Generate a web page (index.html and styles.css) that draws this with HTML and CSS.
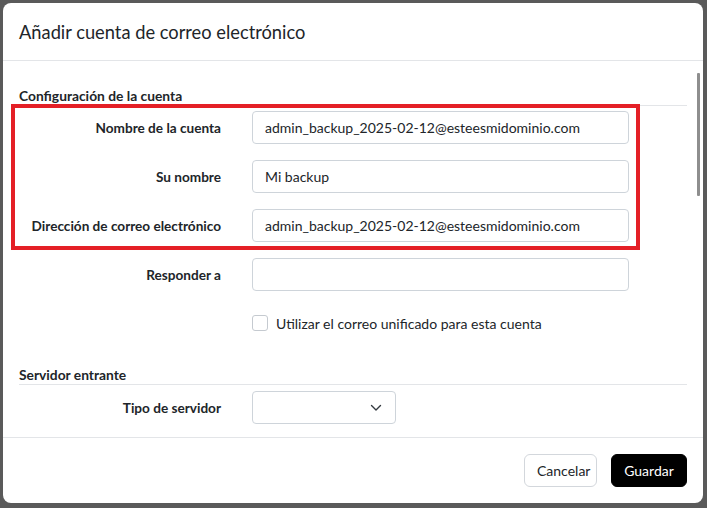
FILE: index.html
```html
<!DOCTYPE html>
<html lang="es">
<head>
<meta charset="utf-8">
<title>Añadir cuenta de correo electrónico</title>
<link rel="stylesheet" href="styles.css">
</head>
<body>
<div class="modal">
  <div class="modal-header">
    <h1 class="modal-title">Añadir cuenta de correo electrónico</h1>
  </div>
  <div class="modal-body">
    <div class="scroll-content">
      <h2 class="section-title">Configuración de la cuenta</h2>
      <div class="form-row first">
        <label class="form-label">Nombre de la cuenta</label>
        <input class="form-input" type="text" value="admin_backup_2025-02-12@esteesmidominio.com">
      </div>
      <div class="form-row">
        <label class="form-label">Su nombre</label>
        <input class="form-input" type="text" value="Mi backup">
      </div>
      <div class="form-row">
        <label class="form-label">Dirección de correo electrónico</label>
        <input class="form-input" type="text" value="admin_backup_2025-02-12@esteesmidominio.com">
      </div>
      <div class="form-row">
        <label class="form-label">Responder a</label>
        <input class="form-input" type="text" value="">
      </div>
      <div class="check-row">
        <span class="checkbox"></span>
        <span class="check-label">Utilizar el correo unificado para esta cuenta</span>
      </div>
      <h2 class="section-title second">Servidor entrante</h2>
      <div class="form-row select-row">
        <label class="form-label">Tipo de servidor</label>
        <div class="select">
          <svg class="chevron" width="12" height="8" viewBox="0 0 12 8"><path d="M1.5 1.5 L6 6 L10.5 1.5" fill="none" stroke="#343a40" stroke-width="1.4" stroke-linecap="round" stroke-linejoin="round"/></svg>
        </div>
      </div>
    </div>
    <div class="scrollbar"><div class="thumb"></div></div>
    <div class="highlight"></div>
  </div>
  <div class="modal-footer">
    <button class="btn btn-secondary">Cancelar</button>
    <button class="btn btn-primary">Guardar</button>
  </div>
</div>
</body>
</html>
```

FILE: styles.css
```css
html, body {
  margin: 0;
  padding: 0;
}
body {
  width: 707px;
  height: 508px;
  background: #5a5a5a;
  font-family: "Lato", "Liberation Sans", sans-serif;
  color: #212529;
  overflow: hidden;
}
.modal {
  margin: 3px 0 0 3px;
  width: 700px;
  height: 500px;
  background: #fff;
  border-radius: 8px;
  display: flex;
  flex-direction: column;
  overflow: hidden;
}
.modal-header {
  height: 57px;
  padding: 0 16px;
  display: flex;
  align-items: center;
  border-bottom: 1px solid #e3e5e8;
  flex: none;
}
.modal-title {
  margin: 0;
  font-size: 18.3px;
  font-weight: 400;
  color: #212529;
}
.modal-body {
  position: relative;
  flex: 1;
  overflow: hidden;
}
.scroll-content {
  padding: 26px 16px 0 16px;
}
.section-title {
  margin: 0;
  font-size: 13.8px;
  font-weight: 700;
  line-height: 18px;
  border-bottom: 1px solid #e3e5e8;
}
.section-title.second {
  margin-top: 35px;
}
.form-row {
  display: grid;
  grid-template-columns: 202px 377px;
  column-gap: 31px;
  align-items: center;
  margin-top: 16px;
}
.form-row.first {
  margin-top: 5px;
}
.form-row.select-row {
  margin-top: 6px;
}
.form-label {
  text-align: right;
  font-size: 13.6px;
  font-weight: 700;
  color: #212529;
}
.form-input {
  box-sizing: border-box;
  height: 33px;
  width: 377px;
  border: 1px solid #ced4da;
  border-radius: 4px;
  padding: 0 12px;
  font-family: inherit;
  font-size: 14px;
  color: #212529;
  background: #fff;
  outline: none;
}
.select {
  box-sizing: border-box;
  width: 144px;
  height: 33px;
  border: 1px solid #ced4da;
  border-radius: 4px;
  display: flex;
  align-items: center;
  justify-content: flex-end;
  padding-right: 13px;
}
.check-row {
  display: flex;
  align-items: center;
  gap: 8px;
  margin: 24px 0 0 233px;
  height: 16px;
}
.checkbox {
  box-sizing: border-box;
  width: 16px;
  height: 16px;
  border: 1px solid #c5cad0;
  border-radius: 3px;
  flex: none;
}
.check-label {
  font-size: 14px;
  color: #212529;
}
.scrollbar {
  position: absolute;
  top: 12px;
  right: 3px;
  width: 3px;
  height: 360px;
}
.thumb {
  width: 3px;
  height: 123px;
  background: #8e8e8e;
  border-radius: 1px;
}
.highlight {
  position: absolute;
  left: 8px;
  top: 43px;
  width: 621px;
  height: 138px;
  border: 4px solid #e41f26;
}
.modal-footer {
  flex: none;
  height: 65px;
  border-top: 1px solid #e3e5e8;
  display: flex;
  align-items: center;
  justify-content: flex-end;
  gap: 14px;
  padding: 0 16px;
}
.btn {
  box-sizing: border-box;
  height: 33px;
  padding: 0 12px;
  border-radius: 6px;
  font-family: inherit;
  font-size: 14px;
}
.btn-secondary {
  background: #fff;
  border: 1px solid #d3d7dc;
  color: #212529;
  width: 73px;
}
.btn-primary {
  background: #000;
  border: 1px solid #000;
  color: #fff;
  width: 76px;
}
```
